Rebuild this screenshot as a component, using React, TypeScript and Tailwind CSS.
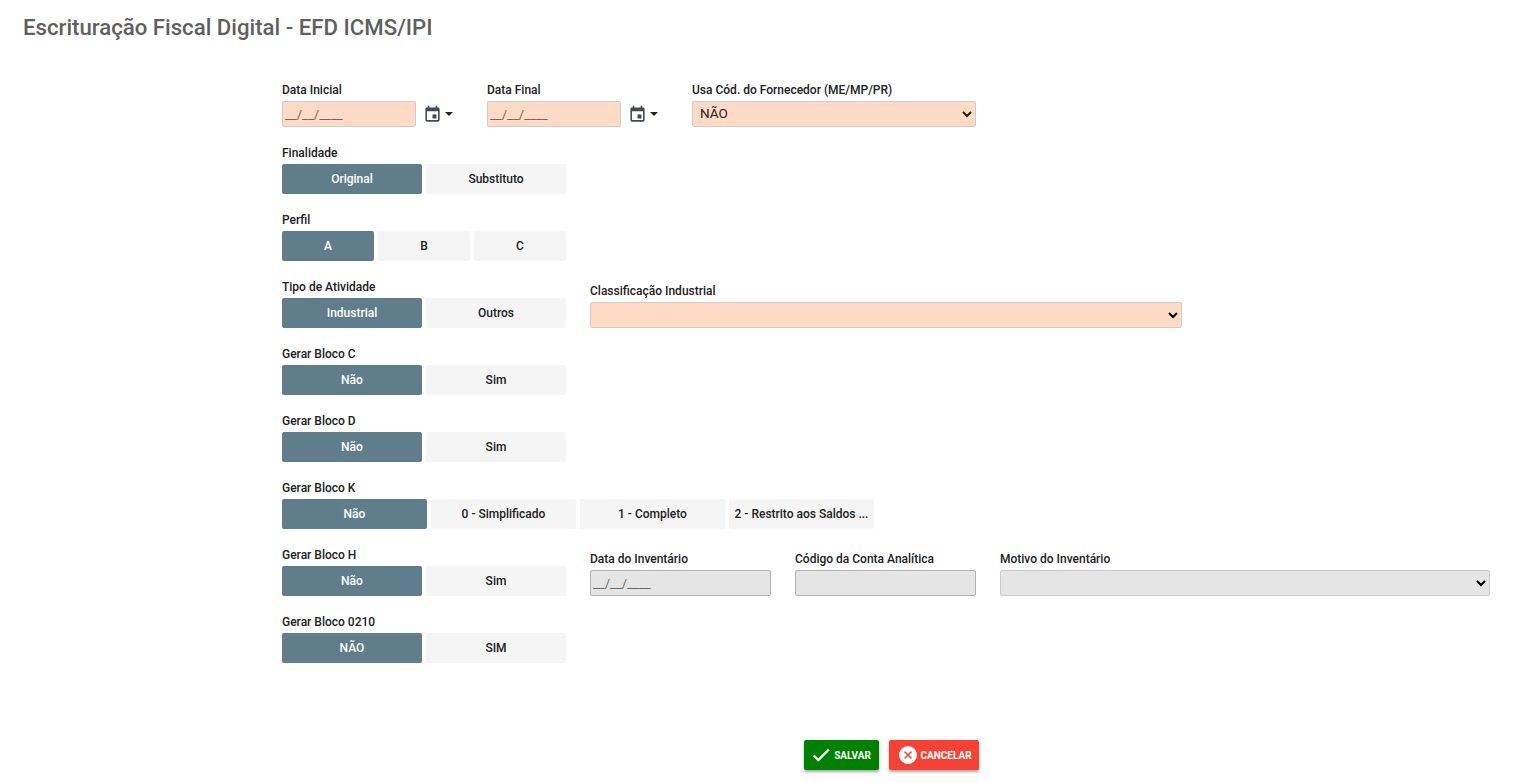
import { X } from "lucide-react";

const font = { roboto: "font-['Roboto',sans-serif]" };

function Field({ label, className, children }: { label: string; className?: string; children: React.ReactNode }) {
  return (
    <div className={className}>
      <label className="mb-[3px] block text-[12px] leading-[15px] font-medium text-[#212121]">{label}</label>
      {children}
    </div>
  );
}

function Toggle({ options, itemClass }: { options: string[]; itemClass: string }) {
  return (
    <div className="flex gap-1">
      {options.map((o, i) => (
        <button
          key={o}
          type="button"
          className={`h-[30px] truncate rounded-[2px] px-1 text-[12px] font-medium ${itemClass} ${
            i === 0 ? "bg-[#607d8b] text-white" : "bg-[#f5f5f5] text-[#212121]"
          }`}
        >
          {o}
        </button>
      ))}
    </div>
  );
}

function DateInput({ disabled }: { disabled?: boolean }) {
  return (
    <input
      disabled={disabled}
      defaultValue="__/__/____"
      className={`h-[26px] w-full rounded-[2px] border px-[2px] text-[13px] text-[#666] outline-none ${
        disabled ? "border-[#b0b0b0] bg-[#e5e5e5]" : "border-[#ccc] bg-[#ffdbc6]"
      }`}
    />
  );
}

function DatePicker({ label }: { label: string }) {
  return (
    <Field label={label}>
      <div className="flex items-center">
        <div className="w-[134px]">
          <DateInput />
        </div>
        <svg viewBox="0 0 24 24" className="ml-[7px] h-[19px] w-[19px] fill-[#424a50]">
          <path d="M17 12h-5v5h5v-5zM16 1v2H8V1H6v2H5c-1.11 0-1.99.9-1.99 2L3 19c0 1.1.89 2 2 2h14c1.1 0 2-.9 2-2V5c0-1.1-.9-2-2-2h-1V1h-2zm3 18H5V8h14v11z" />
        </svg>
        <span className="ml-[3px] h-0 w-0 border-x-[4px] border-t-[4px] border-x-transparent border-t-[#222]" />
      </div>
    </Field>
  );
}

export default function App() {
  const pair = "w-[140px]";

  return (
    <div className={`h-[783px] overflow-hidden bg-white ${font.roboto}`}>
      <h1 className="pt-[15px] pl-[23px] text-[22.2px] leading-[24px] font-medium text-[#5f5f5f]">
        Escrituração Fiscal Digital - EFD ICMS/IPI
      </h1>

      <form className="mt-[44px] ml-[282px] flex w-[1208px] flex-col gap-[19px]">
        <div className="flex">
          <div className="w-[205px]">
            <DatePicker label="Data Inicial" />
          </div>
          <div className="w-[205px]">
            <DatePicker label="Data Final" />
          </div>
          <Field label="Usa Cód. do Fornecedor (ME/MP/PR)" className="w-[284px]">
            <select className="h-[26px] w-full rounded-[2px] border border-[#ccc] bg-[#ffdbc6] px-[3px] pb-[2px] text-[13.5px] text-[#212121] outline-none">
              <option>NÃO</option>
            </select>
          </Field>
        </div>

        <Field label="Finalidade">
          <Toggle options={["Original", "Substituto"]} itemClass={pair} />
        </Field>

        <Field label="Perfil">
          <Toggle options={["A", "B", "C"]} itemClass="w-[92px]" />
        </Field>

        <div className="flex items-end gap-6">
          <Field label="Tipo de Atividade">
            <Toggle options={["Industrial", "Outros"]} itemClass={pair} />
          </Field>
          <Field label="Classificação Industrial" className="w-[592px]">
            <select className="h-[26px] w-full rounded-[2px] border border-[#ccc] bg-[#ffdbc6] text-[13px] outline-none">
              <option></option>
            </select>
          </Field>
        </div>

        <Field label="Gerar Bloco C">
          <Toggle options={["Não", "Sim"]} itemClass={pair} />
        </Field>

        <Field label="Gerar Bloco D">
          <Toggle options={["Não", "Sim"]} itemClass={pair} />
        </Field>

        <Field label="Gerar Bloco K">
          <Toggle
            options={["Não", "0 - Simplificado", "1 - Completo", "2 - Restrito aos Saldos ..."]}
            itemClass="w-[145px]"
          />
        </Field>

        <div className="flex items-end gap-6">
          <Field label="Gerar Bloco H">
            <Toggle options={["Não", "Sim"]} itemClass={pair} />
          </Field>
          <Field label="Data do Inventário" className="w-[181px]">
            <DateInput disabled />
          </Field>
          <Field label="Código da Conta Analítica" className="w-[181px]">
            <input disabled className="h-[26px] w-full rounded-[2px] border border-[#b0b0b0] bg-[#e5e5e5]" />
          </Field>
          <Field label="Motivo do Inventário" className="w-[490px]">
            <select disabled className="h-[26px] w-full rounded-[2px] border border-[#ccc] bg-[#e5e5e5] text-[13px] opacity-100">
              <option></option>
            </select>
          </Field>
        </div>

        <Field label="Gerar Bloco 0210">
          <Toggle options={["NÃO", "SIM"]} itemClass={pair} />
        </Field>

        {/* botoes */}
        <div className="mt-[58px] flex gap-[10px] pl-[522px]">
          <button
            type="button"
            className="flex h-[30px] w-[75px] items-center justify-center gap-[2px] rounded-[2px] bg-[#008000] pr-[2px] text-[10px] font-bold text-white shadow-[0_2px_3px_rgba(0,0,0,0.35)]"
          >
            <svg viewBox="0 0 24 24" className="h-[22px] w-[22px] fill-white stroke-white stroke-[0.6]">
              <path d="M9 16.17 4.83 12l-1.42 1.41L9 19 21 7l-1.41-1.41z" />
            </svg>
            SALVAR
          </button>
          <button
            type="button"
            className="flex h-[30px] w-[90px] items-center justify-center gap-[3px] rounded-[2px] bg-[#f44336] pl-[3px] text-[10px] font-bold text-white shadow-[0_2px_3px_rgba(0,0,0,0.35)]"
          >
            <span className="flex h-[18px] w-[18px] items-center justify-center rounded-full bg-white">
              <X size={12} strokeWidth={3} className="text-[#f44336]" />
            </span>
            CANCELAR
          </button>
        </div>
      </form>
    </div>
  );
}
